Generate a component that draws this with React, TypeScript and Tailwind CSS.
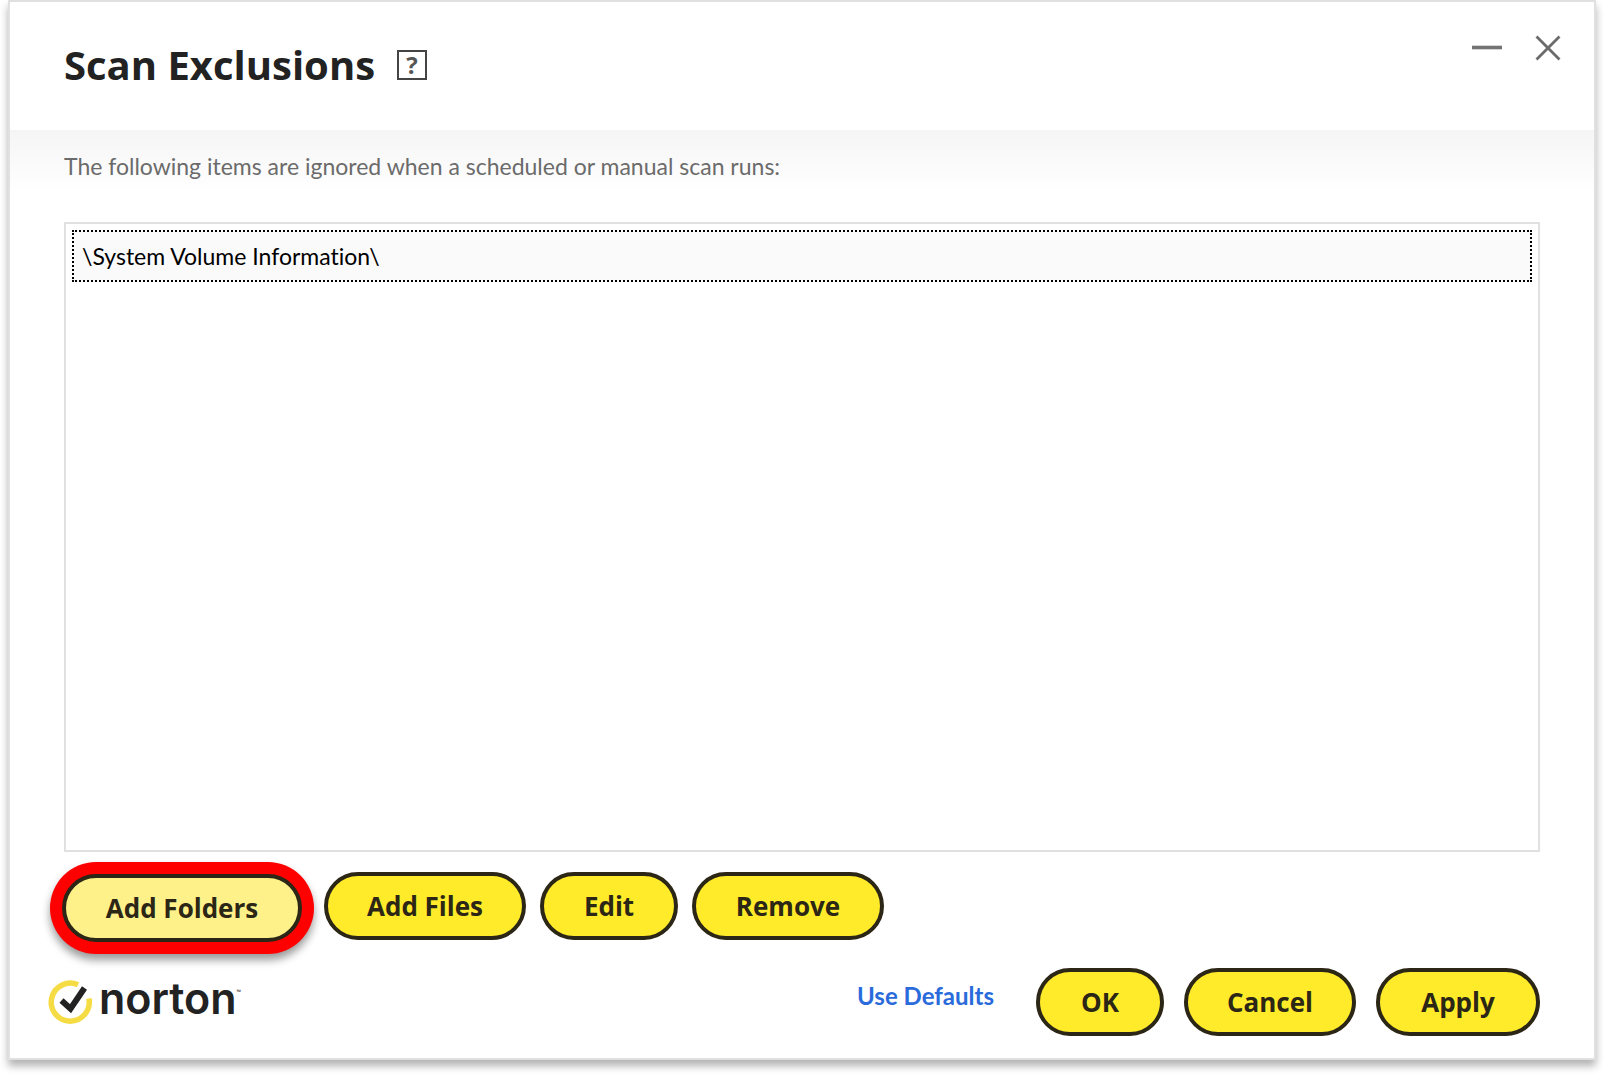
import React, { useState } from 'react';

const initialItems = ['\\System Volume Information\\'];

interface PillButtonProps {
  label: string;
  className: string;
}

const PillButton: React.FC<PillButtonProps> = ({ label, className }) => (
  <button
    type="button"
    className={`h-[68px] shrink-0 rounded-full border-4 border-[#2b2615] text-center text-[26px] leading-8 font-bold text-[#2b2615] ${className}`}
  >
    {label}
  </button>
);

const NortonLogo: React.FC = () => (
  <div className="flex items-center gap-[7px] text-[#222222]">
    <svg width="44" height="44" viewBox="0 0 44 44" fill="none" aria-hidden="true">
      <path d="M30 4.8A19 19 0 1 0 40.9 18.5" stroke="#f5dc45" strokeWidth="5.5" />
      <path d="M13.5 20.5l9 8.2L36.5 8" stroke="#222222" strokeWidth="6" />
    </svg>
    <span className="flex items-start pb-2">
      <span className="font-['Inter',sans-serif] text-[43px] leading-[44px] font-semibold">norton</span>
      <span className="mt-2 text-[6px] leading-4">™</span>
    </span>
  </div>
);

const App: React.FC = () => {
  const [selected, setSelected] = useState(0);

  return (
    <div className="flex min-h-screen flex-col bg-white px-2 pb-4 font-['Open_Sans',sans-serif]">
      <main className="flex flex-1 flex-col border-2 border-[#e0e0e0] bg-white shadow-[0_6px_8px_rgba(0,0,0,0.3)]">
        {/* Title bar */}
        <header className="flex h-32 items-start justify-between pr-8 pl-[54px]">
          <div className="flex items-center gap-[22px] pt-[35px]">
            <h1 className="text-[40px] leading-[56px] font-bold text-[#222222]">Scan Exclusions</h1>
            <button
              type="button"
              aria-label="Help"
              className="flex h-[30px] w-[30px] items-center justify-center border-2 border-[#444444] text-[24px] leading-6 font-bold text-[#555555]"
            >
              ?
            </button>
          </div>
          <div className="flex items-center gap-8 pt-8">
            <button type="button" aria-label="Minimize">
              <svg width="30" height="28" viewBox="0 0 30 28">
                <path d="M0 13.5H30" stroke="#737373" strokeWidth="3.6" />
              </svg>
            </button>
            <button type="button" aria-label="Close">
              <svg width="28" height="28" viewBox="0 0 28 28">
                <path d="M2.5 2.5l23 23M25.5 2.5l-23 23" stroke="#6b6b6b" strokeWidth="2.8" />
              </svg>
            </button>
          </div>
        </header>

        <section className="flex flex-1 flex-col bg-[linear-gradient(#f5f5f5,#ffffff_64px)] px-[54px] pt-5 pb-[22px]">
          <p className="font-['Lato',sans-serif] text-[23px] leading-8 text-[#6b6b6b]">
            The following items are ignored when a scheduled or manual scan runs:
          </p>

          {/* Excluded items */}
          <ul className="mt-10 flex-1 border-2 border-[#e0e0e0] bg-white p-[6px]">
            {initialItems.map((item, index) => (
              <li key={item}>
                <button
                  type="button"
                  onClick={() => setSelected(index)}
                  className={`block h-[52px] w-full border-2 border-dotted px-2 text-left font-['Lato',sans-serif] text-[23px] leading-8 text-black [font-variant-ligatures:none] ${
                    selected === index ? 'border-black bg-[#fafafa]' : 'border-transparent'
                  }`}
                >
                  {item}
                </button>
              </li>
            ))}
          </ul>

          {/* List actions */}
          <div className="mt-[10px] -ml-[14px] flex items-center gap-[10px]">
            <div className="flex rounded-full bg-[#ff0000] p-3 shadow-[0_6px_8px_rgba(0,0,0,0.4)]">
              <PillButton label="Add Folders" className="w-60 bg-[#fff189]" />
            </div>
            <div className="flex gap-[14px] pb-1">
              <PillButton label="Add Files" className="w-[202px] bg-[#ffeb29]" />
              <PillButton label="Edit" className="w-[138px] bg-[#ffeb29]" />
              <PillButton label="Remove" className="w-48 bg-[#ffeb29]" />
            </div>
          </div>

          {/* Footer */}
          <footer className="mt-[14px] -ml-4 flex items-center justify-between">
            <NortonLogo />
            <div className="flex items-center">
              <a href="#" className="mr-[42px] pb-3 font-['Lato',sans-serif] text-[24px] leading-8 font-bold text-[#2a6bdb]">
                Use Defaults
              </a>
              <div className="flex gap-5">
                <PillButton label="OK" className="w-32 bg-[#ffeb29]" />
                <PillButton label="Cancel" className="w-[172px] bg-[#ffeb29]" />
                <PillButton label="Apply" className="w-[164px] bg-[#ffeb29]" />
              </div>
            </div>
          </footer>
        </section>
      </main>
    </div>
  );
};

export default App;
